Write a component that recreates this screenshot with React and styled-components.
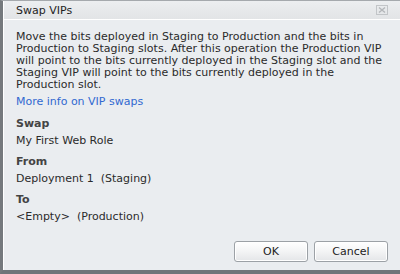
import React from 'react';
import styled, { createGlobalStyle } from 'styled-components';

const GlobalStyle = createGlobalStyle`
  html, body {
    margin: 0;
    padding: 0;
    background: #eaedf0;
  }
`;

// Dialog frame
const Dialog = styled.div`
  width: 400px;
  height: 274px;
  box-sizing: border-box;
  display: flex;
  flex-direction: column;
  background: #eaedf0;
  border-left: 3px solid #75797d;
  border-top: 1px solid #a5a9ad;
  border-bottom: 4px solid #6f7479;
  font-family: "DejaVu Sans", Verdana, sans-serif;
  font-size: 11px;
  color: #2b2b2b;
`;

const Inner = styled.div`
  flex: 1;
  display: flex;
  flex-direction: column;
  border-left: 1px solid #ffffff;
`;

const TitleBar = styled.div`
  height: 18px;
  display: flex;
  align-items: center;
  justify-content: space-between;
  padding: 0 12px 0 12px;
  background: linear-gradient(#eceef0, #e2e4e6);
  border-bottom: 1px solid #ffffff;
`;

const Title = styled.span`
  font-size: 11px;
  color: #1e1e1e;
`;

const CloseButton = styled.span`
  display: flex;
  width: 12px;
  height: 10px;
`;

const Body = styled.div`
  flex: 1;
  display: flex;
  flex-direction: column;
  padding: 11px 16px 0 12px;
`;

const Paragraph = styled.p`
  margin: 0;
  line-height: 12px;
`;

const MoreLink = styled.a`
  display: block;
  margin-top: 5px;
  color: #3169d1;
  text-decoration: none;
  line-height: 12px;
`;

const Field = styled.div`
  display: flex;
  flex-direction: column;
  gap: 5px;
  margin-top: ${(p) => p.$top}px;
`;

const Label = styled.div`
  font-weight: bold;
  color: #444;
  line-height: 12px;
`;

const Value = styled.div`
  line-height: 12px;
  white-space: pre;
`;

const Footer = styled.div`
  display: flex;
  justify-content: flex-end;
  gap: 6px;
  padding: 0 12px 8px 0;
`;

const Button = styled.button`
  width: 74px;
  height: 21px;
  padding: 0;
  font-family: inherit;
  font-size: 11px;
  color: #222;
  border: 1px solid #9ca1a6;
  border-radius: 3px;
  background: linear-gradient(#ffffff 0%, #f3f4f5 50%, #e4e6e8 100%);
  box-shadow: inset 0 0 0 1px #fff;
`;

const CloseIcon = () => (
  <svg width="12" height="10" viewBox="0 0 12 10">
    <rect x="0.5" y="0.5" width="11" height="9" fill="none" stroke="#c2c5c8" />
    <path d="M3 2.5 L9 7.5 M9 2.5 L3 7.5" stroke="#b4b7ba" strokeWidth="1.5" />
  </svg>
);

const App = () => {
  return (
    <>
      <GlobalStyle />
      <Dialog>
        <Inner>
          <TitleBar>
            <Title>Swap VIPs</Title>
            <CloseButton>
              <CloseIcon />
            </CloseButton>
          </TitleBar>
          <Body>
            <Paragraph>
              Move the bits deployed in Staging to Production and the bits in
              Production to Staging slots. After this operation the Production VIP
              will point to the bits currently deployed in the Staging slot and the
              Staging VIP will point to the bits currently deployed in the
              Production slot.
            </Paragraph>
            <MoreLink href="#">More info on VIP swaps</MoreLink>
            <Field $top={10}>
              <Label>Swap</Label>
              <Value>My First Web Role</Value>
            </Field>
            <Field $top={9}>
              <Label>From</Label>
              <Value>{'Deployment 1  (Staging)'}</Value>
            </Field>
            <Field $top={9}>
              <Label>To</Label>
              <Value>{'<Empty>  (Production)'}</Value>
            </Field>
          </Body>
          <Footer>
            <Button>OK</Button>
            <Button>Cancel</Button>
          </Footer>
        </Inner>
      </Dialog>
    </>
  );
};

export default App;
